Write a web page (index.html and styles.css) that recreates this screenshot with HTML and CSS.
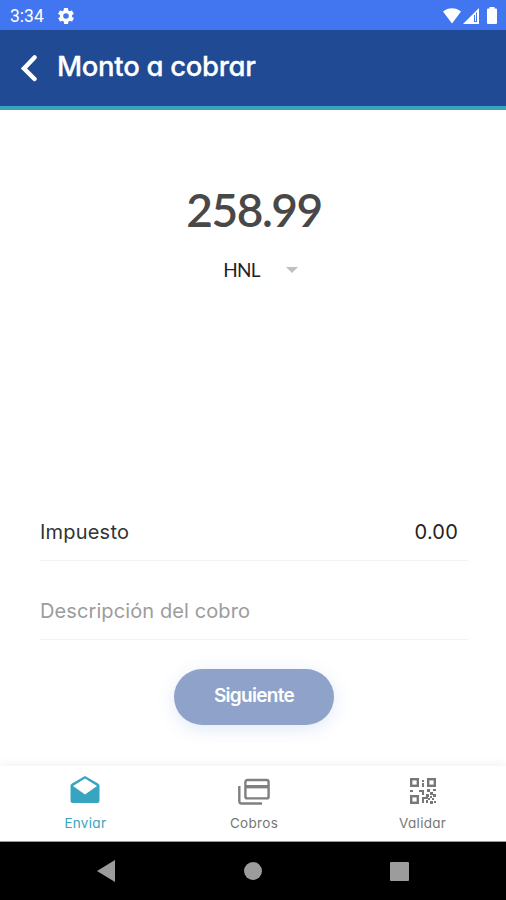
FILE: index.html
```html
<!DOCTYPE html>
<html lang="es">
<head>
    <meta charset="UTF-8">
    <meta name="viewport" content="width=device-width, initial-scale=1.0">
    <title>Monto a cobrar</title>
    <link rel="stylesheet" href="styles.css">
</head>
<body>
    <div class="status-bar">
        <span class="time">3:34</span>
        <svg class="gear" width="16" height="16" viewBox="2 2 20 20"><path fill="#fff" d="M19.4 13c.1-.6.1-1.400 0-2l2.100-1.600c.2-.2.2-.4.100-.6l-2-3.500c-.1-.2-.3-.3-.6-.2l-2.500 1c-.5-.4-1.100-.7-1.700-1l-.4-2.700c0-.2-.2-.4-.5-.4h-4c-.2 0-.4.200-.5.400l-.4 2.700c-.6.2-1.200.600-1.700 1l-2.500-1c-.2-.1-.5 0-.6.2l-2 3.500c-.1.200-.1.500.1.600L4.600 11c-.1.600-.1 1.400 0 2l-2.100 1.600c-.2.200-.3.400-.1.600l2 3.500c.1.200.4.300.6.200l2.500-1c.5.400 1.100.7 1.700 1l.4 2.700c0 .2.200.4.500.4h4c.2 0 .5-.2.500-.4l.4-2.700c.6-.2 1.200-.6 1.700-1l2.500 1c.2.100.5 0 .6-.2l2-3.500c.1-.2.100-.5-.1-.6zM12 15.500a3.500 3.500 0 1 1 0-7 3.500 3.500 0 0 1 0 7z"/></svg>
        <div class="status-icons">
            <svg width="18" height="16" viewBox="0 0 18 16"><path fill="#fff" d="M0 3.600C5-.9 13-.9 18 3.600L9 15.500z"/></svg>
            <svg width="16" height="16" viewBox="0 0 16 16"><path fill="#fff" fill-rule="evenodd" d="M0 16L16 0v16zM11 7v7h3V4.500h-1V13h-1V7z"/></svg>
            <svg class="battery" width="10" height="17" viewBox="0 0 10 17"><path fill="#fff" d="M2.500 0h5v1.500H9q1 0 1 1V16q0 1-1 1H1q-1 0-1-1V2.500q0-1 1-1h1.500z"/></svg>
        </div>
    </div>

    <header class="header">
        <svg class="back" width="18" height="28" viewBox="0 0 18 28"><path d="M15.500 3.500L5 14.500L15.500 25" fill="none" stroke="#fff" stroke-width="4.500" stroke-linecap="round" stroke-linejoin="miter"/></svg>
        <h1>Monto a cobrar</h1>
    </header>

    <main class="content">
        <div class="amount">258.99</div>
        <div class="currency">
            <span>HNL</span>
            <svg width="12" height="6" viewBox="0 0 12 6"><path fill="#c0c0c0" d="M0 0h12L6 6z"/></svg>
        </div>
        <div class="form">
            <div class="field">
                <span class="label">Impuesto</span>
                <span class="value">0.00</span>
            </div>
            <div class="field">
                <span class="placeholder">Descripción del cobro</span>
            </div>
        </div>
        <button class="next">Siguiente</button>
    </main>

    <nav class="tabs">
        <a class="tab active">
            <svg width="30" height="30" viewBox="0 0 30 30"><path fill="#38a5c0" fill-rule="evenodd" d="M15 0L28 7.500Q29.500 8.400 29.500 10V24.500Q29.500 27 27 27H3Q.5 27 .5 24.500V10Q.5 8.400 2 7.500zM15 2.500L3 10L15 18.500L27 10z"/></svg>
            <span>Enviar</span>
        </a>
        <a class="tab">
            <svg width="32" height="30" viewBox="0 0 32 30"><g fill="none" stroke="#808080" stroke-width="2.400"><rect x="7.400" y="4" width="23.200" height="18.400" rx="2"/><path d="M7 10.700h24" stroke-width="3.400"/><path d="M1.300 10v15Q1.300 27.500 3.500 27.500H24"/></g></svg>
            <span>Cobros</span>
        </a>
        <a class="tab">
            <svg width="26" height="30" viewBox="0 0 26 30"><g fill="none" stroke="#777" stroke-width="2.400"><rect x="1.200" y="3.200" width="6.600" height="6.600"/><rect x="18.200" y="3.200" width="6.600" height="6.600"/><rect x="1.200" y="20.200" width="6.600" height="6.600"/></g><path fill="#777" d="M12 4h2v2h-2zM12 7h2v4h-2zM0 14h3v2H0zM9 14h5v2H9zM12 15h2v4h-2zM17 13h3v3h-3zM23 13h3v2h-3zM20 16h3v3h-3zM23 18h3v3h-3zM16 18h3v3h-3zM12 21h6v2h-6zM12 23h2v4h-2zM18 22h2v2h-2zM20 20h2v2h-2zM22 22h2v2h-2zM20 25h3v3h-3zM24 25h2v2h-2zM16 24h2v3h-2z"/></svg>
            <span>Validar</span>
        </a>
    </nav>

    <div class="system-nav">
        <svg width="18" height="22" viewBox="0 0 18 22"><path fill="#9c9c9c" d="M18 0v22L0 11z"/></svg>
        <div class="home"></div>
        <div class="recent"></div>
    </div>
</body>
</html>
```
FILE: styles.css
```css
* {
    box-sizing: border-box;
}
body {
    display: flex;
    flex-direction: column;
    width: 506px;
    height: 900px;
    margin: 0;
    overflow: hidden;
    background: #fff;
    font-family: Inter, "Liberation Sans", sans-serif;
    font-feature-settings: "cv11";
}
svg {
    display: block;
    flex: none;
}
.status-bar {
    display: flex;
    align-items: center;
    height: 30px;
    padding: 1px 9px 0 10px;
    background: #4275f0;
    color: #fff;
}
.time {
    width: 48px;
    font: 17.5px Roboto, sans-serif;
}
.status-icons {
    display: flex;
    align-items: center;
    gap: 2px;
    margin-left: auto;
}
.battery {
    margin-left: 6px;
}
.header {
    display: flex;
    height: 80px;
    padding: 24px 0 0 19px;
    border-bottom: 4px solid #38a5c0;
    background: #204a93;
    color: #fff;
}
.header h1 {
    margin: -4px 0 0 20px;
    font-size: 27.5px;
    font-weight: 500;
    line-height: 32px;
    letter-spacing: -0.3px;
    white-space: nowrap;
    -webkit-text-stroke: 0.3px #fff;
}
.content {
    display: flex;
    flex: 1;
    flex-direction: column;
    align-items: center;
}
.amount {
    margin: 70px 0 0 2px;
    color: #484848;
    font: 600 46px/60px Lato, sans-serif;
    letter-spacing: -1.5px;
}
.currency {
    display: flex;
    align-items: center;
    gap: 26px;
    height: 24px;
    margin: 18px 0 0 15px;
    color: #222;
    font: 19px/24px Lato, sans-serif;
    letter-spacing: -0.7px;
}
.form {
    width: 428px;
    margin: 200px 0 0 2px;
}
.field {
    display: flex;
    align-items: flex-end;
    justify-content: space-between;
    height: 79px;
    padding: 0 10px 15px 0;
    border-bottom: 1px solid #f2f2f2;
    font-size: 20px;
    line-height: 26px;
}
.label {
    color: #333;
    letter-spacing: 0.2px;
}
.value {
    color: #222;
    letter-spacing: 0.2px;
}
.placeholder {
    color: #9c9c9c;
    letter-spacing: 0.1px;
}
.next {
    width: 160px;
    height: 56px;
    margin: 29px 0 0 2px;
    padding: 0 0 3px;
    border: none;
    border-radius: 28px;
    background: #8fa3ca;
    box-shadow: 0 4px 18px rgba(66, 117, 200, 0.16);
    color: #fff;
    font: 600 19px Inter, sans-serif;
    letter-spacing: -0.7px;
}
.tabs {
    display: flex;
    height: 76px;
    border-bottom: 1px solid #999;
    background: #fff;
    box-shadow: 0 -2px 9px rgba(0, 0, 0, 0.06);
}
.tab {
    display: flex;
    flex: 1;
    flex-direction: column;
    align-items: center;
    gap: 9px;
    padding: 10px 0 0 2px;
    color: #777;
    font-size: 13.5px;
    line-height: 16px;
    letter-spacing: 0.3px;
}
.tab.active {
    color: #38a5c0;
}
.system-nav {
    display: flex;
    align-items: center;
    justify-content: space-between;
    height: 58px;
    padding: 0 97px;
    background: #000;
}
.home,
.recent {
    width: 18px;
    height: 18px;
    border-radius: 50%;
    background: #9c9c9c;
}
.recent {
    width: 19px;
    height: 19px;
    border-radius: 1px;
}
```
